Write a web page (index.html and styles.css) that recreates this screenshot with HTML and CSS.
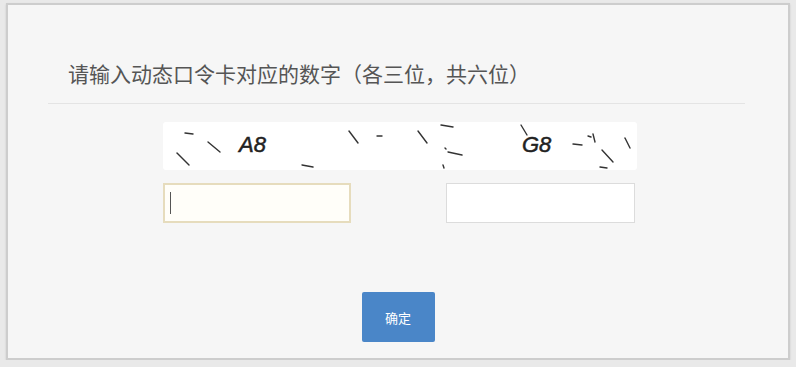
FILE: index.html
```html
<!DOCTYPE html>
<html>
<head>
    <title>动态口令卡</title>
    <link rel="stylesheet" href="styles.css">
</head>
<body>
    <div class="panel">
        <h2 class="title">请输入动态口令卡对应的数字（各三位，共六位）</h2>
        <div class="divider"></div>
        <div class="card-box">
            <svg class="captcha" width="474" height="48" viewBox="0 0 474 48">
                <rect width="474" height="48" rx="3" fill="#ffffff"/>
                <g stroke="#333" stroke-width="1.4" stroke-linecap="round" fill="none">
                    <path d="M22 11 L30 12"/>
                    <path d="M45 20 L57 30"/>
                    <path d="M14 31 L26 43"/>
                    <path d="M139 43 L150 45"/>
                    <path d="M186 9 L195 21"/>
                    <path d="M214 14 L219 14"/>
                    <path d="M255 9 L264 21"/>
                    <path d="M278 3 L290 5"/>
                    <path d="M282 26 L283 27"/>
                    <path d="M285 30 L299 33"/>
                    <path d="M280 43 L281 46"/>
                    <path d="M358 3 L364 13"/>
                    <path d="M410 22 L419 23"/>
                    <path d="M425 14 L428 15"/>
                    <path d="M430 12 L432 20"/>
                    <path d="M439 28 L450 40"/>
                    <path d="M437 45 L444 46"/>
                    <path d="M462 16 L467 26"/>
                </g>
                <text x="76" y="30" class="code">A8</text>
                <text x="359" y="30" class="code">G8</text>
            </svg>
            <div class="inputs">
                <input type="text" class="code-input active">
                <input type="text" class="code-input">
            </div>
        </div>
        <div class="actions">
            <button class="ok-btn">确定</button>
        </div>
    </div>
</body>
</html>
```

FILE: styles.css
```css
body {
    margin: 0;
    padding: 3px 6px 0;
    background-color: #e9e9e9;
    font-family: "Noto Sans CJK SC", "Noto Sans", sans-serif;
}
.panel {
    box-sizing: border-box;
    height: 357px;
    border: 2px solid #cdcdcd;
    background: #f6f6f6;
    box-shadow: 0 1px 2px rgba(0,0,0,0.12);
}
.title {
    margin: 56px 0 0 60px;
    font-size: 21px;
    line-height: 24px;
    font-weight: normal;
    color: #555;
}
.divider {
    height: 1px;
    margin: 18px 43px 0 40px;
    background: #e4e4e4;
}
.card-box {
    width: 474px;
    margin: 18px 0 0 155px;
}
.captcha {
    display: block;
}
.code {
    font-family: "Liberation Sans", Arial, sans-serif;
    font-style: italic;
    font-size: 22px;
    fill: #222;
    stroke: #222;
    stroke-width: 0.5;
}
.inputs {
    display: flex;
    justify-content: space-between;
    margin-top: 13px;
}
.code-input {
    box-sizing: border-box;
    width: 189px;
    height: 40px;
    margin-right: 2px;
    border: 1px solid #dcdcdc;
    background: #fff;
    padding: 0 6px;
    outline: none;
}
.code-input.active {
    width: 188px;
    margin-right: 0;
    border: 2px solid #e6dcbd;
    background-color: #fffef9;
    background-image: linear-gradient(#555, #555);
    background-size: 1px 22px;
    background-position: 5px center;
    background-repeat: no-repeat;
}
.actions {
    display: flex;
    justify-content: center;
    margin-top: 69px;
}
.ok-btn {
    width: 73px;
    height: 50px;
    border: none;
    border-radius: 2px;
    background-color: #4a86c8;
    color: #fff;
    font-family: "Noto Sans CJK SC", sans-serif;
    font-size: 13px;
    cursor: pointer;
}
```
